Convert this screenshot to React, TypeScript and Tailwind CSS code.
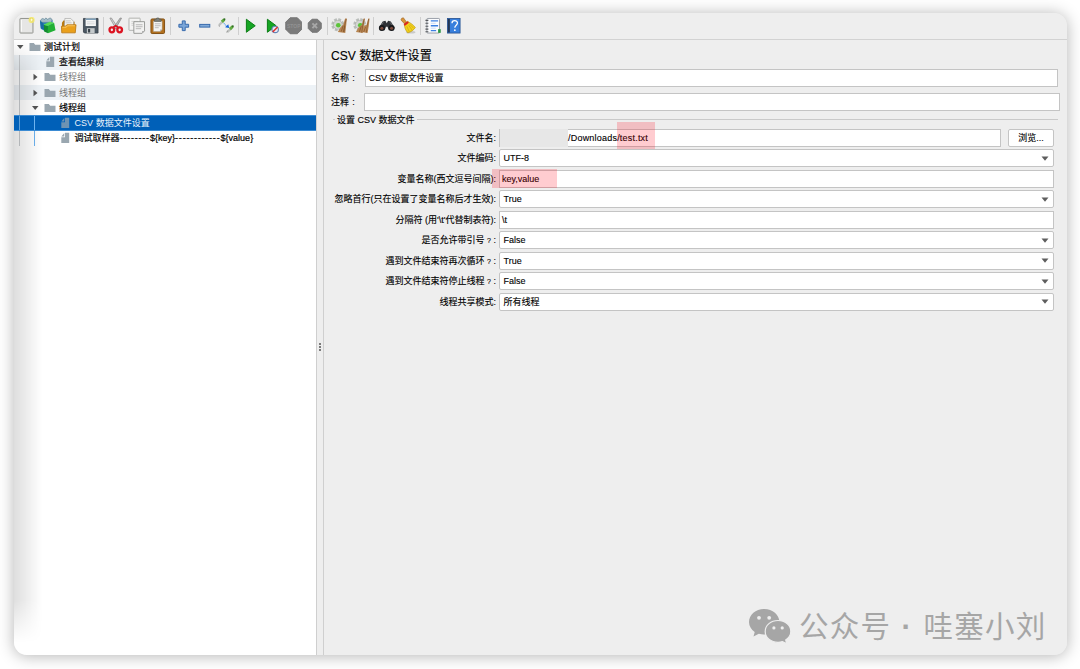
import type { ReactNode } from 'react'
import clsx from 'clsx'

type IconName =
  | 'new' | 'templates' | 'open' | 'save' | 'cut' | 'copy' | 'paste' | 'plus' | 'minus' | 'toggle'
  | 'start' | 'startNoPause' | 'stop' | 'shutdown' | 'clear' | 'clearAll' | 'search' | 'reset' | 'functions' | 'help'

const gear = (
  <>
    <circle cx="7" cy="8" r="5" fill="none" stroke="#b9bdba" strokeWidth="3.4" strokeDasharray="2.6 1.3" />
    <circle cx="7" cy="8" r="4.6" fill="#d3d6d2" stroke="#a7aaa6" strokeWidth=".6" />
    <circle cx="7.5" cy="8.5" r="2.400" fill="#5cc43a" />
  </>
)

const stopShape = 'M5.3 0.8h7.4l4.5 4.5v7.4l-4.5 4.5H5.3L.8 12.7V5.3z'

// All icons are drawn on an 18x18 grid
const icons: Record<IconName, ReactNode> = {
  new: (
    <>
      <rect x="2" y="1.5" width="13.4" height="15" rx=".6" fill="#e6e6e5" stroke="#8d8f8a" strokeWidth="1" />
      <path d="M3.4 3v12" stroke="#fff" strokeWidth="1" />
      <circle cx="14" cy="3" r="3.2" fill="#f5ea6a" opacity=".8" />
      <path d="M14 .6l.7 1.7 1.7.7-1.7.7-.7 1.7-.7-1.7-1.7-.7 1.7-.7z" fill="#fffde0" stroke="#ead94c" strokeWidth=".5" />
    </>
  ),
  templates: (
    <>
      <path d="M1 3.500l4-1.200h8l1 1.200v8.200L5 14 1.800 12z" fill="#2c86b6" />
      <path d="M1.500 4Q3 0 5.500 2.500 7-.5 9 2.500q3-3 4.500.5l-1 2.500H3z" fill="#a5bdc8" stroke="#69899a" strokeWidth=".7" />
      <path d="M4.500 8l4.700 1.300v7.300L5.300 15z" fill="#128c2f" />
      <path d="M9.200 9.300L15.500 6l1.500 7.500-7.800 3.300z" fill="#21b035" />
      <path d="M4.500 8L11 5l4.500 1-6.300 3.300z" fill="#57dc52" />
      <path d="M1 4l3.500 2.500.8 6.500L2 11.500z" fill="#1b6aa5" />
    </>
  ),
  open: (
    <>
      <path d="M2 6l1.500-2.500h3L8 5h7v10H2z" fill="#b87910" />
      <path d="M5 1.500h6l3 3V11H4.500z" fill="#f3f3f0" stroke="#999" strokeWidth=".6" />
      <path d="M6 4h5M6 6h6" stroke="#b8b8b8" strokeWidth=".8" />
      <path d="M1.500 9.500h4l1.500-1.500h9.500l-.8 8.300H1.800z" fill="#eaa01c" stroke="#b5730b" strokeWidth=".8" />
      <path d="M2.500 10.500h4l1.200-1.500h7.700" stroke="#fbd178" strokeWidth=".8" fill="none" />
    </>
  ),
  save: (
    <>
      <path d="M1.500 1.500h15v15h-14l-1-1z" fill="#4c5863" stroke="#343d45" strokeWidth=".8" />
      <rect x="3.700" y="1.500" width="10.600" height="7.800" fill="#f7f8f8" />
      <path d="M3.700 1.500h10.600v1.600H3.700z" fill="#7d9db6" />
      <path d="M5 5h8M5 7h8" stroke="#c7cacc" strokeWidth=".7" />
      <rect x="5" y="11.500" width="8" height="5" fill="#c4c9cb" />
      <rect x="6.200" y="12.300" width="2.200" height="3.600" fill="#3a434b" />
    </>
  ),
  cut: (
    <>
      <path d="M3 1.200l1.500-.2 6.800 10-2.200.8z" fill="#d2d2d2" stroke="#7b7b7b" strokeWidth=".6" />
      <path d="M15 1.200l-1.500-.2-6.800 10 2.200.8z" fill="#b9b9b9" stroke="#777" strokeWidth=".6" />
      <path d="M6.500 10.500L9 9l2.500 1.500" fill="none" stroke="#dc1422" strokeWidth="1.600" />
      <ellipse cx="5" cy="13.200" rx="2.400" ry="2.600" fill="none" stroke="#dc1422" strokeWidth="2.400" />
      <ellipse cx="13" cy="13.200" rx="2.400" ry="2.600" fill="none" stroke="#dc1422" strokeWidth="2.400" />
    </>
  ),
  copy: (
    <>
      <rect x="1" y="1.200" width="11.500" height="12.500" rx=".5" fill="#f4f4f3" stroke="#a8aaa6" strokeWidth=".9" />
      <path d="M3.500 4.500h7M3.500 6.500h3M3.500 8.500h2" stroke="#c7c7c7" strokeWidth=".8" />
      <path d="M6 4.800h11v9.500l-2.500 2.500H6z" fill="#f2f2f1" stroke="#8f918d" strokeWidth=".9" />
      <path d="M8 8h7M8 10h7M8 12h5.500" stroke="#b0b0b0" strokeWidth=".9" />
      <path d="M14.500 16.800v-2.500H17z" fill="#aaa" />
    </>
  ),
  paste: (
    <>
      <rect x="2" y="2" width="14" height="15" rx="1.200" fill="#b3701e" stroke="#815013" strokeWidth="1" />
      <path d="M4.500 4.200h9v8.600l-2 2.200h-7z" fill="#f4f4f2" stroke="#a49b8d" strokeWidth=".5" />
      <path d="M6 7h6M6 9h6M6 11h4" stroke="#ababab" strokeWidth=".8" />
      <path d="M11.500 15v-2.200h2z" fill="#aaa" />
      <path d="M5.500 4.500V2.300h2L8 1h2l.5 1.300h2v2.200z" fill="#7e817c" stroke="#50524e" strokeWidth=".6" />
    </>
  ),
  plus: <path d="M7.500 4h3v3.500H14v3h-3.500V14h-3v-3.500H4v-3h3.500z" fill="#7ba6d8" stroke="#3568ab" strokeWidth="1" />,
  minus: <rect x="3.800" y="7.600" width="10.400" height="2.800" fill="#80a9d8" stroke="#3568ab" strokeWidth="1" />,
  toggle: (
    <>
      <path d="M2.200 8.200L6 4.500M10.500 15.500l4-3.500" stroke="#c0c3c1" strokeWidth="2.400" />
      <path d="M5 5l2.500-2.500" stroke="#62ac42" strokeWidth="3" />
      <path d="M13.300 12.500l2.800-2.700" stroke="#62ac42" strokeWidth="3" />
      <circle cx="7.600" cy="2.400" r="1.100" fill="#326f24" />
      <circle cx="16.200" cy="9.600" r="1.100" fill="#326f24" />
      <path d="M2 8l.5 2M10 16l1-2" stroke="#888" strokeWidth=".8" />
      <path d="M7 6.500l3 3" stroke="#5fa7f4" strokeWidth="1.200" strokeDasharray="1.200 .6" />
      <path d="M12.500 11.200L8.300 10.500l3.300-3z" fill="#1664d8" />
    </>
  ),
  start: <path d="M4.500 2.300L13.600 9l-9.100 6.700z" fill="#16a524" stroke="#087a13" strokeWidth="1" />,
  startNoPause: (
    <>
      <path d="M3.500 2.300L12.500 9l-9 6.700z" fill="#16a524" stroke="#087a13" strokeWidth="1" />
      <circle cx="11.500" cy="12.800" r="3.300" fill="#e7edf5" stroke="#6385b7" strokeWidth="1.200" />
      <path d="M9 15.300l5-5" stroke="#df3030" strokeWidth="1.500" />
    </>
  ),
  stop: (
    <>
      <path d={stopShape} fill="#7b7b7b" stroke="#747474" strokeWidth="1" />
      <text x="9" y="11.200" textAnchor="middle" fontSize="6" fontWeight="700" fontFamily="Liberation Sans" textLength="14" lengthAdjust="spacingAndGlyphs" fill="#929292">STOP</text>
    </>
  ),
  shutdown: (
    <>
      <path d="M6.200 2.300h5.600l3.900 3.900v5.600l-3.900 3.900H6.200l-3.900-3.900V6.200z" fill="#7a7a7a" stroke="#747474" strokeWidth="1" />
      <path d="M6.600 6.600l4.800 4.800M11.400 6.600l-4.800 4.800" stroke="#a7a7a7" strokeWidth="2" />
    </>
  ),
  clear: (
    <>
      {gear}
      <path d="M14.500 1.500h1.800L15.700 8l-1 8.500L7 15.500 9.500 11l3-3z" fill="#b68552" />
      <path d="M15.700 2l-1.500 6-1.500 7.500M12.500 9l-2 6M14 9.500l-.5 6" stroke="#805027" strokeWidth=".7" fill="none" />
    </>
  ),
  clearAll: (
    <>
      {gear}
      <path d="M11 1.500h1.300L11.300 8 10 16.500 3 15.500 5.500 11 9 8z" fill="#b68552" />
      <path d="M15.700 1.500H17L16.300 9 15 16.500 8.700 15.500 10 10l4-2z" fill="#bd8b57" />
      <path d="M8.500 9.500l-2 6M11.500 2l-1.500 7-1 7M16.200 2l-1.500 7-1 7M13 10l-2 5.500" stroke="#805027" strokeWidth=".7" fill="none" />
    </>
  ),
  search: (
    <>
      <path d="M4.800 4.500L7.600 3.800 9 6.300l1.400-2.500 2.800.7 3.900 6.500-1 2.500h-5L9.800 10H8.200l-1.300 3.500h-5L.9 11z" fill="#303236" />
      <circle cx="4" cy="11.200" r="3.100" fill="#17191c" />
      <circle cx="14" cy="11.200" r="3.100" fill="#17191c" />
      <circle cx="4" cy="11.500" r="1.600" fill="#7d4b3d" />
      <circle cx="14" cy="11.500" r="1.600" fill="#7d4b3d" />
      <path d="M5.500 5.500L3.800 8M12.500 5.500l1.700 2.500" stroke="#777b80" strokeWidth=".8" />
    </>
  ),
  reset: (
    <>
      <ellipse cx="12" cy="15.600" rx="5" ry="1.300" fill="#c9c9c9" />
      <path d="M2.800 1.300l1.700-.5 3.300 4.500L5.600 7 2 3z" fill="#d8943a" stroke="#99601e" strokeWidth=".6" />
      <path d="M5.500 7.200l3.600-2.700c2 1.500 5 2.700 7.700 6.300-1.500 2.500-4.500 4.700-7.800 5.500-2.500-3-3.500-6-3.500-9.100z" fill="#f3d21d" stroke="#bc9a10" strokeWidth=".7" />
      <path d="M4.800 7.300l3.900-3 1.500 1.500-4.300 3.400z" fill="#d92720" />
      <path d="M8 9.500l2.500 5.500M10 8.500l3.500 5M11 7.500l4 4" stroke="#c29d10" strokeWidth=".6" />
    </>
  ),
  functions: (
    <>
      <rect x="3" y="1.500" width="13" height="15" rx=".8" fill="#fbfcfe" stroke="#8e949e" strokeWidth=".9" />
      <path d="M7 4h7.500M7 9h7.500M7 14h5.500" stroke="#3c80e2" strokeWidth="1.500" />
      <path d="M7 6.500h5M7 11.500h5" stroke="#b9d2f5" strokeWidth=".8" />
      <path d="M1.500 3.500h3M1.500 6.500h3M1.500 9.500h3M1.500 12.500h3M1.500 15.200h3" stroke="#56585c" strokeWidth="1.100" />
      <rect x="14.500" y="12.500" width="2.700" height="3.800" fill="#299644" />
    </>
  ),
  help: (
    <>
      <rect x="2.500" y="1.500" width="13" height="15" fill="#377fdd" stroke="#2d5795" strokeWidth=".9" />
      <path d="M3 2h2v14H3z" fill="#253754" />
      <path d="M7.200 6.500c0-3.500 5.600-3.500 5.600-.3 0 2.300-2.700 2.100-2.700 4.800" fill="none" stroke="#fff" strokeWidth="1.300" />
      <circle cx="10.100" cy="13.500" r=".9" fill="#fff" />
    </>
  ),
}

const toolbar: IconName[][] = [
  ['new', 'templates', 'open', 'save'],
  ['cut', 'copy', 'paste'],
  ['plus', 'minus', 'toggle'],
  ['start', 'startNoPause', 'stop', 'shutdown'],
  ['clear', 'clearAll'],
  ['search', 'reset'],
  ['functions', 'help'],
]

type TreeNode = {
  label: string
  level: number
  kind: 'folder' | 'file'
  open?: boolean
  disabled?: boolean
  selected?: boolean
}

const tree: TreeNode[] = [
  { label: '测试计划', level: 0, kind: 'folder', open: true },
  { label: '查看结果树', level: 1, kind: 'file' },
  { label: '线程组', level: 1, kind: 'folder', open: false, disabled: true },
  { label: '线程组', level: 1, kind: 'folder', open: false, disabled: true },
  { label: '线程组', level: 1, kind: 'folder', open: true },
  { label: 'CSV 数据文件设置', level: 2, kind: 'file', selected: true },
  { label: '调试取样器--------${key}------------${value}', level: 2, kind: 'file' },
]

type Field = { label: string; value: string; select?: boolean; marked?: boolean }

const fields: Field[] = [
  { label: '文件编码:', value: 'UTF-8', select: true },
  { label: '变量名称(西文逗号间隔):', value: 'key,value', marked: true },
  { label: '忽略首行(只在设置了变量名称后才生效):', value: 'True', select: true },
  { label: "分隔符 (用'\\t'代替制表符):", value: '\\t' },
  { label: '是否允许带引号？:', value: 'False', select: true },
  { label: '遇到文件结束符再次循环？:', value: 'True', select: true },
  { label: '遇到文件结束符停止线程？:', value: 'False', select: true },
  { label: '线程共享模式:', value: '所有线程', select: true },
]

function Toolbar() {
  return (
    <div className="flex h-[26.500px] shrink-0 items-center border-b border-[#d2d2d2] bg-[#eeeeee] pl-[2px]">
      {toolbar.map((group, i) => (
        <div key={i} className="flex items-center">
          {i > 0 && (
            <div className="flex w-[3.800px] justify-center">
              <div className="h-[18px] w-px bg-[#cfcfcf]" />
            </div>
          )}
          {group.map((name) => (
            <button key={name} className="flex w-[21.300px] justify-center" aria-label={name}>
              <svg viewBox="0 0 18 18" className="h-[17.500px] w-[17.500px]">{icons[name]}</svg>
            </button>
          ))}
        </div>
      ))}
    </div>
  )
}

function TreeRow({ node, index }: { node: TreeNode; index: number }) {
  return (
    <div
      className={clsx(
        'relative flex h-[15.200px] items-center whitespace-nowrap',
        node.selected ? 'z-10 border-y border-[#3b8bd3] bg-[#0060b8] text-[#e8f2fb]' : index % 2 === 1 && 'bg-[#edf2f6]',
        node.disabled && 'text-[#777]',
        !node.selected && !node.disabled && 'text-black [-webkit-text-stroke:0.2px_black]',
      )}
    >
      {/* Indent guides */}
      {node.level > 0 && <div className={clsx('absolute inset-y-0 left-[5px] w-px', node.selected ? 'bg-[#5f9fd6]' : 'bg-[#c9cccf]')} />}
      {node.level > 1 && <div className="absolute inset-y-0 left-[20px] w-px bg-[#6db3f0]" />}
      <div
        className={clsx(
          'flex shrink-0 items-center',
          node.level === 0 && 'w-[30px] pl-[2px]',
          node.level === 1 && 'w-[45px] pl-[17px]',
          node.level === 2 && 'w-[60.500px] pl-[32px]',
        )}
      >
        <svg viewBox="0 0 8 8" className="mr-[5px] h-2 w-2 shrink-0" fill="#555">
          {node.open === true && <path d="M1 2h6.500L4.200 6z" />}
          {node.open === false && <path d="M2.500 .8v6.400L6.500 4z" />}
        </svg>
        {node.kind === 'folder' ? (
          <svg viewBox="0 0 12 10" className="h-2.5 w-3" fill="#9aa7b0">
            <path d="M.5 1h4.300l1.400 1.800h5.300V9H.5z" />
          </svg>
        ) : (
          <svg viewBox="0 0 12 12" className="h-3 w-3" fill={node.selected ? '#6e93b2' : '#9aa7b0'}>
            <path d="M6 .8h4.200V11H2.300V5.200H6zM5.300.9v3.600h-3z" />
          </svg>
        )}
      </div>
      {/* Hyphen runs are set wider than the rest of the label */}
      <span className="pt-[1.500px]">
        {node.label.split(/(-+)/).map((part, i) => (
          <span key={i} className={part.startsWith('-') ? 'tracking-[0.780px]' : 'tracking-[0.030px]'}>{part}</span>
        ))}
      </span>
    </div>
  )
}

const inputClass = 'relative flex items-center border border-[#c4c4c4] bg-white whitespace-nowrap'

function FieldRow({ field }: { field: Field }) {
  return (
    <div className="flex h-[20.500px] items-center">
      <label className="w-[172px] shrink-0 pt-[1.200px] text-right whitespace-nowrap">
        {field.label.split('？').map((part, i) => (
          <span key={i}>
            {i > 0 && <span className="inline-block w-[9px] text-center text-[7px]">?</span>}
            {part}
          </span>
        ))}
      </label>
      <div className={clsx(inputClass, 'ml-[3px] h-[18px] w-[555px]', field.select ? 'rounded-[2px] pl-[3.500px]' : 'pl-[2px]')}>
        <span className="pt-[1.200px]">{field.value}</span>
        {field.select && (
          <svg viewBox="0 0 8 5" className="mr-[4px] ml-auto h-[5px] w-2" fill="#5e5e5e">
            <path d="M.5.5h7L4 4.700z" />
          </svg>
        )}
        {field.marked && <div className="absolute -top-[2px] -left-[8px] h-[19px] w-[65px] bg-[#ff0014]/20" />}
      </div>
    </div>
  )
}

function ConfigPanel() {
  return (
    <div className="flex flex-1 flex-col bg-[#eeeeee] text-black [-webkit-text-stroke:0.12px_black]">
      <h1 className="mt-[6px] ml-[7px] h-5 text-[12.100px] leading-5">CSV 数据文件设置</h1>
      <div className="mt-[3px] flex h-[18px] items-center pl-[7px]">
        <label className="w-[34px] pt-[1.500px]">名称<span className="inline-block w-[9px] text-center">:</span></label>
        <div className={clsx(inputClass, 'h-[18px] w-[693px] pl-[2.500px]')}>
          <span className="pt-[1.500px]">CSV 数据文件设置</span>
        </div>
      </div>
      <div className="mt-[6px] flex h-[18px] items-center pl-[7px]">
        <label className="w-[33px] pt-[1.500px]">注释<span className="inline-block w-[9px] text-center">:</span></label>
        <div className={clsx(inputClass, 'h-[18px] w-[696px]')} />
      </div>
      <div className="mt-[4px] mr-[9px] ml-[9px] flex h-[10px] items-center">
        <div className="h-px w-[2px] bg-[#c9c9c9]" />
        <span className="mr-[2px] ml-[2px] pt-[1.500px] leading-[10px]">设置 CSV 数据文件</span>
        <div className="h-px flex-1 bg-[#c9c9c9]" />
      </div>
      <div className="mt-[3px] flex h-[20.500px] items-center">
        <label className="w-[172px] shrink-0 pt-[1.500px] text-right">文件名:</label>
        <div className={clsx(inputClass, 'ml-[3px] h-[18px] w-[502px]')}>
          <div className="h-[18px] w-[68px] shrink-0 bg-[#e7e7e7]" />
          <span className="pt-[1.500px] tracking-[0.210px]">/Downloads/test.txt</span>
          <div className="absolute -top-[8px] left-[117px] h-[28px] w-[38px] bg-[#ff0014]/20" />
        </div>
        <button className="ml-[7px] flex h-[18px] w-[46px] items-center justify-center rounded-[2px] border border-[#c4c4c4] bg-white pt-[1.500px]">浏览...</button>
      </div>
      {fields.map((field) => (
        <FieldRow key={field.label} field={field} />
      ))}
    </div>
  )
}

function Watermark() {
  return (
    <div className="absolute top-[604px] left-[749px] flex items-center text-[#a6a6a6]">
      <svg viewBox="0 0 42 36" className="h-9 w-[42px]" fill="currentColor">
        <path d="M15.200 1C6.800 1 0 6.800 0 14c0 4 2.200 7.500 5.700 9.900L4.500 28.500l5.300-2.700c1.700.5 3.500.8 5.400.8 8.400 0 15.200-5.700 15.200-12.700S23.600 1 15.200 1z" />
        <path d="M29 12.500c-7.100 0-12.800 4.800-12.800 10.900S21.900 34.300 29 34.300c1.600 0 3.100-.2 4.500-.7l4.300 2.200-1.100-3.900c3.100-2 5.100-5 5.100-8.500 0-6.100-5.700-10.900-12.800-10.900z" stroke="#eee" strokeWidth="1.200" />
        <g fill="#eee">
          <circle cx="10" cy="9.800" r="1.900" />
          <circle cx="20.200" cy="9.800" r="1.900" />
          <circle cx="24.900" cy="19.900" r="1.600" />
          <circle cx="33.200" cy="19.900" r="1.600" />
        </g>
      </svg>
      <div className="ml-[8px] flex pt-[2px] text-[29.500px] leading-[42px] tracking-[1.300px] whitespace-nowrap">
        <span>公众号</span>
        <span className="w-[32px] pl-[10px] font-bold">·</span>
        <span>哇塞小刘</span>
      </div>
    </div>
  )
}

export default function App() {
  return (
    <div className="relative h-[669px] w-[1080px] overflow-hidden bg-white pt-[13px] pl-[14px] font-['Liberation_Sans','Noto_Sans_CJK_SC',sans-serif] text-[9px]">
      <div className="flex h-[642px] w-[1053px] flex-col overflow-hidden rounded-[13px] bg-[#eeeeee] shadow-[0_1px_16px_rgba(0,0,0,0.300)]">
        <Toolbar />
        <div className="flex min-h-0 flex-1">
          <div className="relative w-[302px] shrink-0 bg-white">
            {tree.map((node, i) => (
              <TreeRow key={i} node={node} index={i} />
            ))}
            <div className="pointer-events-none absolute inset-y-0 left-0 w-[28px] bg-linear-to-r from-black/13 to-transparent mask-[linear-gradient(to_bottom,transparent,black_5%,black_91%,transparent_98%)]" />
          </div>
          {/* Split pane divider */}
          <div className="flex w-[8px] shrink-0 flex-col items-center justify-center gap-px border-x border-[#cfcfcf] bg-[#eeeeee]">
            <div className="h-[2px] w-[2px] rounded-full bg-[#555]" />
            <div className="h-[2px] w-[2px] rounded-full bg-[#555]" />
            <div className="h-[2px] w-[2px] rounded-full bg-[#555]" />
          </div>
          <ConfigPanel />
        </div>
      </div>
      <Watermark />
    </div>
  )
}
